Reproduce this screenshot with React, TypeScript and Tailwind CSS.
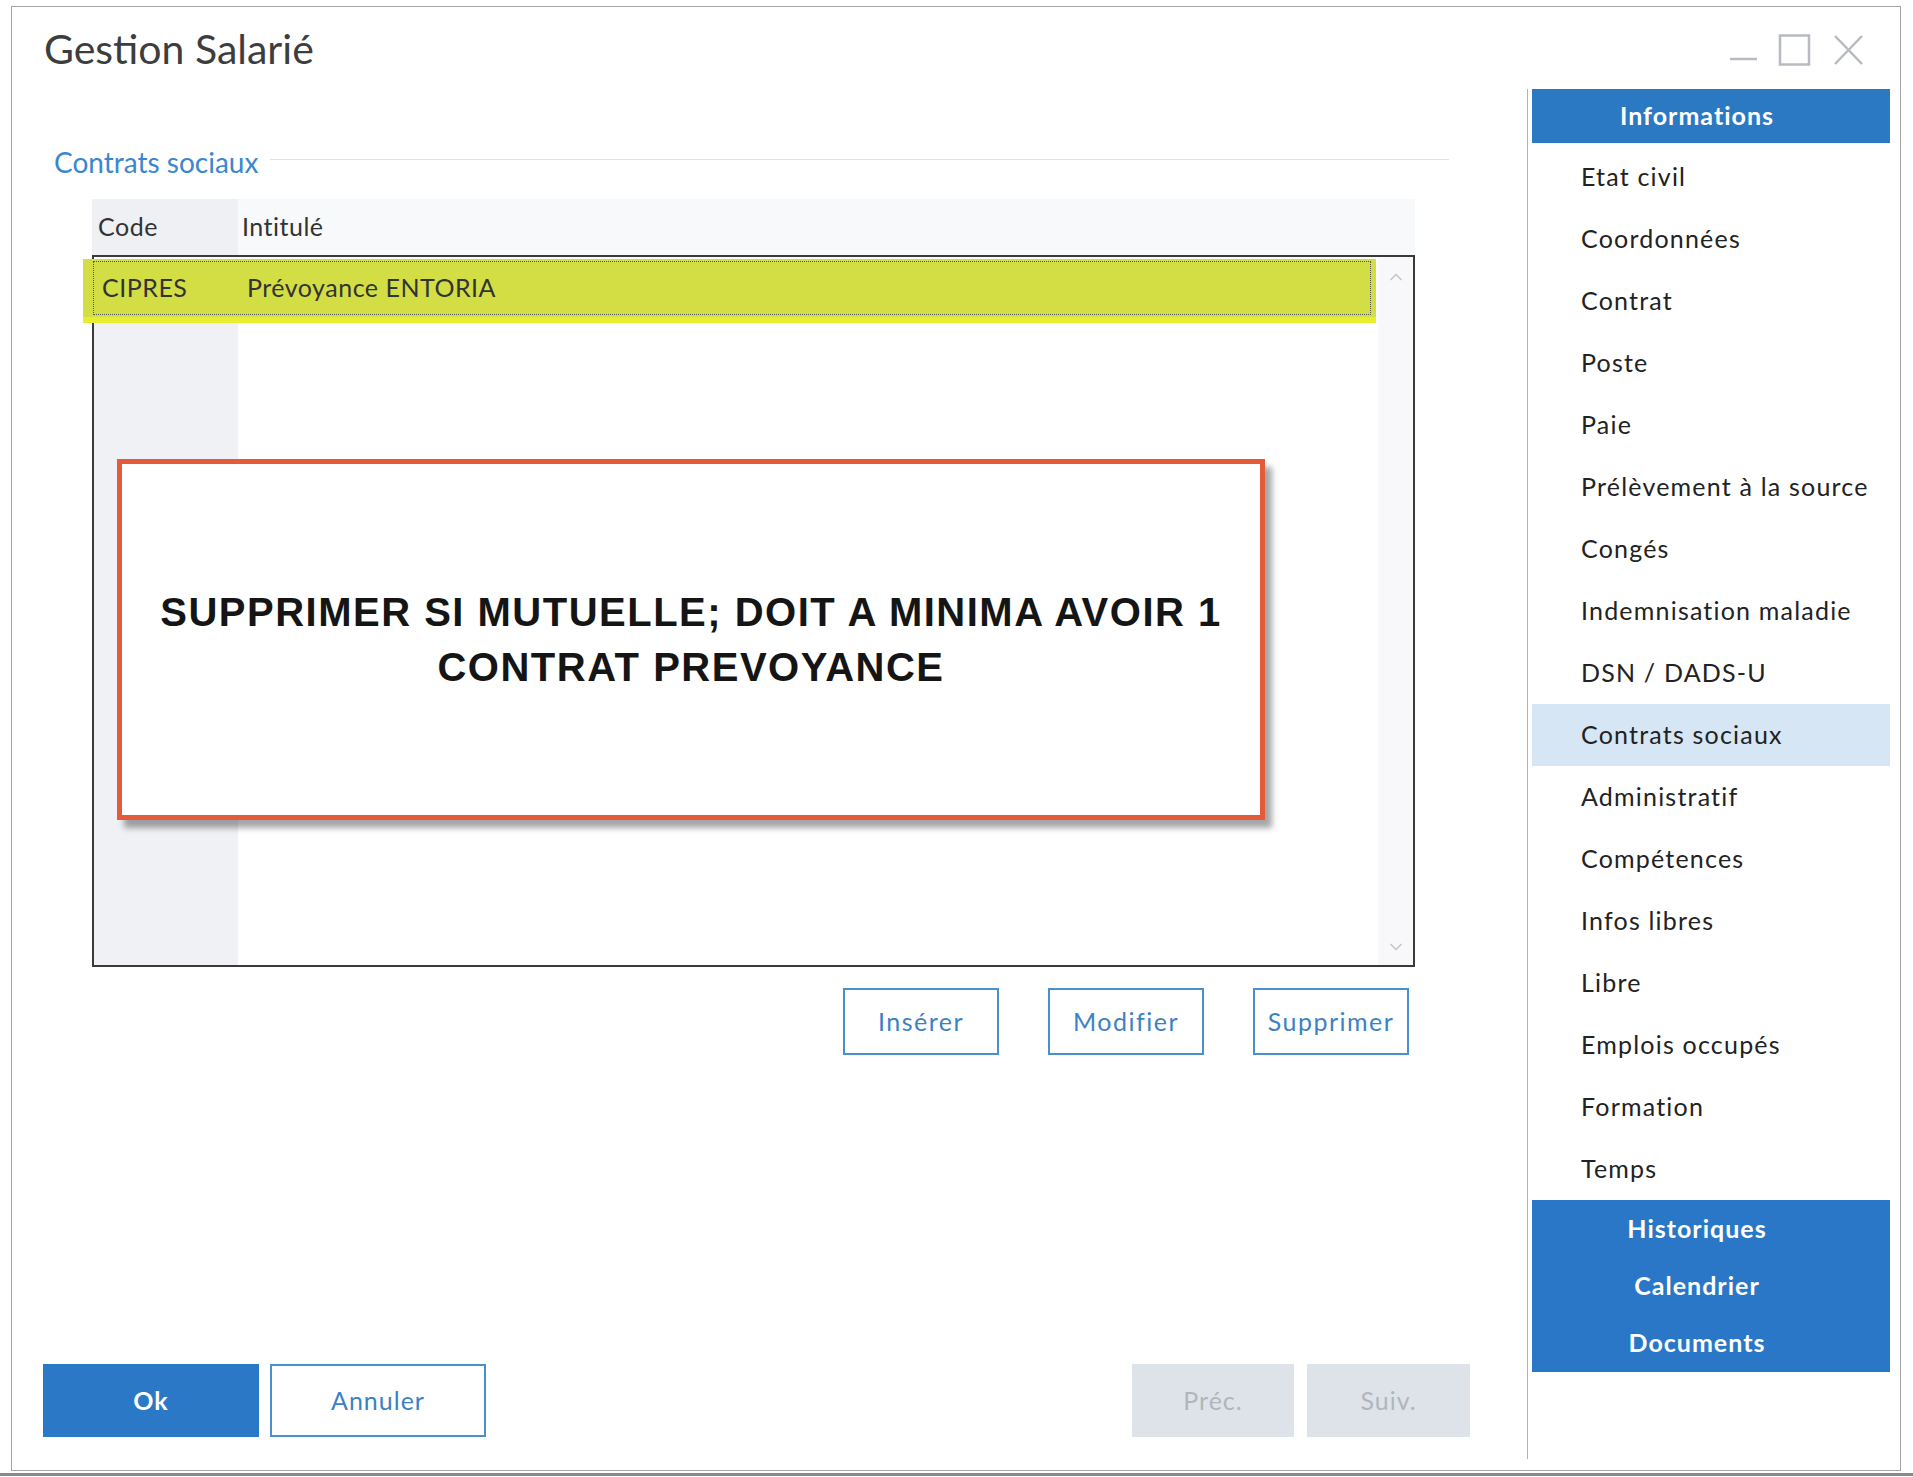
import { ChevronDown, ChevronUp } from 'lucide-react'

const menu = [
  'Etat civil',
  'Coordonnées',
  'Contrat',
  'Poste',
  'Paie',
  'Prélèvement à la source',
  'Congés',
  'Indemnisation maladie',
  'DSN / DADS-U',
  'Contrats sociaux',
  'Administratif',
  'Compétences',
  'Infos libres',
  'Libre',
  'Emplois occupés',
  'Formation',
  'Temps',
]

function WindowControls() {
  return (
    <svg width="134" height="32" viewBox="0 0 134 32" fill="none" stroke="#b7bbc1" strokeWidth="2.5">
      <line x1="0" y1="25" x2="27" y2="25" />
      <rect x="50" y="1.5" width="29" height="29" />
      <line x1="105" y1="2" x2="132" y2="30" />
      <line x1="132" y1="2" x2="105" y2="30" />
    </svg>
  )
}

export default function App() {
  return (
    <div className="w-[1913px] h-[1477px] bg-white pt-[6px] pl-[11px] font-['Lato',sans-serif]">
      <div className="flex w-[1890px] h-[1465px] border border-[#a5a5a5]">
        {/* main pane */}
        <div className="flex flex-col w-[1515px]">
          <h1 className="pl-[32px] pt-[20px] text-[41px] leading-[44px] text-[#3d3d3d] font-normal">
            Gestion Salarié
          </h1>

          <div className="mt-[75px] pl-[42px] mr-[78px] flex items-center">
            <span className="text-[28px] leading-[32px] text-[#3b87cf]">Contrats sociaux</span>
            <div className="flex-1 h-px bg-[#dfe3e9] ml-[12px] -mt-[6px]" />
          </div>

          <div className="mt-[21px] ml-[80px] w-[1323px]">
            <div className="h-[56px] flex bg-[#f8f9fb] text-[25px] text-[#333] tracking-[0.5px]">
              <div className="w-[146px] bg-[#eef0f3] pl-[6px] flex items-center">Code</div>
              <div className="pl-[4px] flex items-center">Intitulé</div>
            </div>

            <div className="relative h-[712px] border-2 border-[#3a3a3a] flex">
              <div className="flex-1 flex flex-col">
                <div className="mt-[2px] -ml-[11px] w-[1293px] h-[64px] bg-[#d3de45] border-b-[6px] border-[#e6ee2f] pt-[2px] pl-[10px]">
                  <div className="w-[1278px] h-[54px] border border-dotted border-[#555] flex items-center text-[25px] text-[#333] tracking-[0.5px]">
                    <span className="w-[145px] pl-[8px]">CIPRES</span>
                    <span className="pl-[8px]">Prévoyance ENTORIA</span>
                  </div>
                </div>
                <div className="flex-1 flex">
                  <div className="w-[144px] bg-[#f0f1f5]" />
                  <div className="flex-1" />
                </div>
              </div>
              <div className="w-[35px] bg-[#f8f8fa] flex flex-col items-center justify-between pt-[10px] pb-[8px]">
                <ChevronUp size={20} className="text-[#c3c6cc]" />
                <ChevronDown size={20} className="text-[#c3c6cc]" />
              </div>

              <div className="absolute left-[23px] top-[202px] w-[1148px] h-[361px] bg-white border-[5px] border-[#e55a3a] shadow-[7px_8px_6px_rgba(0,0,0,0.35)] flex flex-col items-center justify-center font-['Liberation_Sans',Arial,sans-serif] font-bold text-[40px] leading-[55px] tracking-[1.5px] text-[#151515] text-center">
                <div>SUPPRIMER SI MUTUELLE; DOIT A MINIMA AVOIR 1</div>
                <div>CONTRAT PREVOYANCE</div>
              </div>
            </div>
          </div>

          <div className="mt-[21px] mr-[118px] flex justify-end gap-[49px]">
            {['Insérer', 'Modifier', 'Supprimer'].map((b) => (
              <button
                key={b}
                className="w-[156px] h-[67px] border-2 border-[#4a8fd0] text-[#3b82c4] text-[25px] tracking-[1.5px] flex items-center justify-center"
              >
                {b}
              </button>
            ))}
          </div>

          <div className="mt-auto mb-[33px] ml-[31px] mr-[57px] flex">
            <button className="w-[216px] h-[73px] bg-[#2b78c6] text-white text-[25px] font-bold tracking-[1px]">Ok</button>
            <button className="ml-[11px] w-[216px] h-[73px] border-2 border-[#4a8fd0] text-[#3b82c4] text-[25px] tracking-[1px]">
              Annuler
            </button>
            <div className="flex-1" />
            <button className="w-[162px] h-[73px] bg-[#dee3ea] text-[#b1b5bb] text-[25px] tracking-[1px]">Préc.</button>
            <button className="ml-[13px] w-[163px] h-[73px] bg-[#dee3ea] text-[#b1b5bb] text-[25px] tracking-[1px]">Suiv.</button>
          </div>
        </div>

        {/* right navigation */}
        <div className="flex-1 flex flex-col">
          <div className="h-[82px] flex justify-end items-start pt-[27px] pr-[36px]">
            <WindowControls />
          </div>
          <div className="flex-1 mr-[10px] mb-[11px] border-l border-[#b3b3b3] pl-[4px] flex flex-col">
            <div className="h-[54px] bg-[#2b79c2] text-white text-[25px] font-bold tracking-[1px] flex items-center justify-center pr-[28px]">
              Informations
            </div>
            <div className="mt-[3px]">
              {menu.map((m) => (
                <div
                  key={m}
                  className={`h-[62px] pl-[49px] flex items-center text-[25px] tracking-[1.2px] text-[#222] ${
                    m === 'Contrats sociaux' ? 'bg-[#d6e6f4]' : ''
                  }`}
                >
                  {m}
                </div>
              ))}
            </div>
            <div className="bg-[#2a77c7] pb-[1px]">
              {['Historiques', 'Calendrier', 'Documents'].map((m) => (
                <div
                  key={m}
                  className="h-[57px] flex items-center justify-center pr-[28px] text-white text-[25px] font-bold tracking-[1px]"
                >
                  {m}
                </div>
              ))}
            </div>
          </div>
        </div>
      </div>
      <div className="h-[3px] bg-[#8a8a8a] -ml-[11px] mt-[2px]" />
    </div>
  )
}
